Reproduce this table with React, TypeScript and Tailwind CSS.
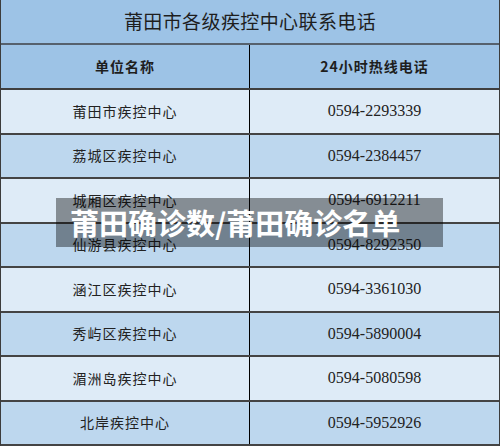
import React from "react";

const rows: [string, string][] = [
  ["莆田市疾控中心", "0594-2293339"],
  ["荔城区疾控中心", "0594-2384457"],
  ["城厢区疾控中心", "0594-6912211"],
  ["仙游县疾控中心", "0594-8292350"],
  ["涵江区疾控中心", "0594-3361030"],
  ["秀屿区疾控中心", "0594-5890004"],
  ["湄洲岛疾控中心", "0594-5080598"],
  ["北岸疾控中心", "0594-5952926"],
];

export default function App() {
  return (
    <div className="relative w-[500px] h-[446px] overflow-hidden bg-[#deebf7] border-l border-r border-[#3c3c3c] font-['Noto_Sans_CJK_SC','Noto_Sans',sans-serif] text-[#222]">
      <div className="h-[45px] flex items-center justify-center bg-[#9dc3e6] border-b-2 border-[#56616d] text-[19px] tracking-[0.4px] text-[#1e1e1e]">
        莆田市各级疾控中心联系电话
      </div>
      <div className="h-[45px] grid grid-cols-2 bg-[#9dc3e6] border-b-2 border-[#3f3f3f] font-bold text-[14px] tracking-[1px] text-[#1e1e1e]">
        <div className="flex items-center justify-center border-r border-black">单位名称</div>
        <div className="flex items-center justify-center">24小时热线电话</div>
      </div>
      {rows.map(([name, phone], i) => (
        <div
          key={name}
          className={
            i % 2 === 0
              ? "h-[44.5px] grid grid-cols-2 border-b-2 border-[#444444] bg-[#deebf7]"
              : "h-[44.5px] grid grid-cols-2 border-b-2 border-[#444444] bg-[#bdd7ee]"
          }
        >
          <div className="flex items-center justify-center border-r border-black text-[14px] tracking-[1px]">
            {name}
          </div>
          <div className="flex items-center justify-center text-[16px] font-['Liberation_Serif','Noto_Sans_CJK_SC',serif]">
            {phone}
          </div>
        </div>
      ))}
      <div className="absolute left-[55px] top-[198px] w-[387px] h-[49px] bg-black/40 flex items-center pl-[14px] text-white font-bold text-[29px] leading-none">
        莆田确诊数/莆田确诊名单
      </div>
    </div>
  );
}
